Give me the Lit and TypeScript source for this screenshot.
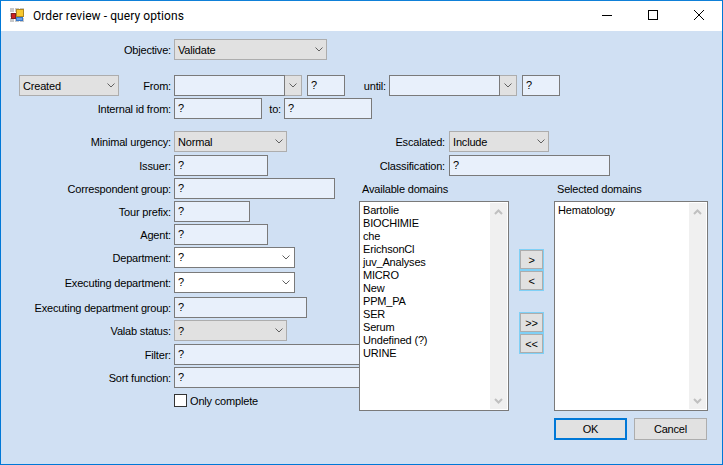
import { LitElement, html, css, svg } from 'lit';
import { customElement } from 'lit/decorators.js';

const CHEVRON = html`<svg class="chev" width="8" height="5" viewBox="0 0 8 5">
  <path d="M0.5 0.5 L4 4 L7.5 0.5" fill="none" stroke="#606060" stroke-width="1" />
</svg>`;

const AVAILABLE = [
  'Bartolie', 'BIOCHIMIE', 'che', 'ErichsonCl', 'juv_Analyses', 'MICRO', 'New',
  'PPM_PA', 'SER', 'Serum', 'Undefined (?)', 'URINE',
];

@customElement('app-root')
export class AppRoot extends LitElement {
  static styles = css`
    :host {
      display: block;
      width: 723px;
      height: 465px;
      box-sizing: border-box;
      border: 1px solid #0078d7;
      border-top-color: #0f80d8;
      overflow: hidden;
      background: #d0e0f3;
      font-family: 'Liberation Sans', Arial, sans-serif;
      font-size: 11px;
      letter-spacing: -0.18px;
      color: #000;
    }

    .titlebar {
      height: 30px;
      background: #fff;
      display: flex;
      align-items: center;
      padding-left: 9px;
    }
    .app-icon {
      margin: 0 9px 3px 0;
    }
    .title {
      font-family: 'Roboto', sans-serif;
      font-size: 12px;
      letter-spacing: 0.08px;
      flex: 1;
    }
    .win-btn {
      width: 46px;
      height: 30px;
      padding-bottom: 2px;
      box-sizing: border-box;
      display: flex;
      align-items: center;
      justify-content: center;
    }

    .form {
      padding-left: 18px;
    }

    .row {
      display: flex;
      align-items: center;
      height: 21px;
    }
    .lbl {
      width: 155px;
      padding-right: 3px;
      box-sizing: border-box;
      text-align: right;
      white-space: nowrap;
      flex: none;
    }

    .field {
      height: 21px;
      box-sizing: border-box;
      flex: none;
      display: flex;
      align-items: center;
      padding-left: 3px;
    }
    .input {
      background: #e8f0fb;
      border: 1px solid #7a7a7a;
    }
    .combo {
      background: #e1e1e1;
      border: 1px solid #adadad;
      justify-content: space-between;
      padding-right: 3px;
    }
    .edit-combo {
      background: #fff;
      border: 1px solid #7a7a7a;
      justify-content: space-between;
      padding-right: 4px;
    }
    .q {
      position: relative;
      top: -1px;
    }

    .dropbtn {
      width: 17px;
      height: 21px;
      box-sizing: border-box;
      background: #e1e1e1;
      border: 1px solid #adadad;
      border-left: none;
      display: flex;
      align-items: center;
      justify-content: center;
      flex: none;
    }

    .main {
      display: grid;
      grid-template-columns: 340px 1fr;
      margin-top: 12px;
    }
    .left {
      display: flex;
      flex-direction: column;
      gap: 2px;
      min-width: 0;
    }

    .right {
      display: flex;
      flex-direction: column;
    }
    .right-top {
      display: flex;
      flex-direction: column;
      gap: 3px;
    }
    .right .lbl {
      width: 90px;
      padding-right: 4px;
    }
    .domain-heads {
      display: flex;
      height: 25px;
      align-items: center;
      padding: 1px 0 0 3px;
      box-sizing: border-box;
    }
    .domain-heads span:first-child {
      width: 195px;
    }
    .domains {
      display: flex;
      height: 210px;
    }
    .list {
      box-sizing: border-box;
      background: #fff;
      border: 1px solid #7a7a7a;
      display: flex;
      justify-content: space-between;
      padding: 2px 1px 1px 3px;
      flex: none;
    }
    .items {
      line-height: 13px;
      white-space: nowrap;
    }
    .scroll {
      width: 17px;
      margin-top: -1px;
      background: #f0f0f0;
      display: flex;
      flex-direction: column;
      justify-content: space-between;
      align-items: center;
      padding: 6px 0 5px;
      box-sizing: border-box;
    }

    .arrows {
      width: 45px;
      flex: none;
      padding: 48px 0 0 10px;
      box-sizing: border-box;
      display: flex;
      flex-direction: column;
    }
    .arrow-group {
      display: flex;
      flex-direction: column;
      width: 25px;
    }
    .arrow-group + .arrow-group {
      margin-top: 21px;
    }
    .arrow {
      width: 25px;
      height: 21px;
      box-sizing: border-box;
      border: 1px solid #7fd0f6;
      outline: 1px solid #adadad;
      outline-offset: -2px;
      background: #e1e1e1;
      display: flex;
      align-items: center;
      justify-content: center;
    }

    .actions {
      display: flex;
      gap: 7px;
      margin: 7px 0 0 195px;
    }
    .btn {
      width: 73px;
      height: 22px;
      box-sizing: border-box;
      background: #e1e1e1;
      border: 1px solid #adadad;
      display: flex;
      align-items: center;
      justify-content: center;
    }
    .btn.default {
      border: 2px solid #0078d7;
    }

    .check {
      display: flex;
      align-items: center;
      margin: 4px 0 0 155px;
      height: 13px;
    }
    .box {
      width: 13px;
      height: 13px;
      box-sizing: border-box;
      border: 1px solid #333;
      background: #fff;
      margin-right: 3px;
    }

    .objective {
      margin-top: 8px;
    }
    .gap-date {
      margin-top: 15px;
    }
    .gap-id {
      margin-top: 2px;
    }
    .date-picker {
      display: flex;
      flex: none;
    }
    .source {
      width: 100px;
    }
    .from-lbl {
      width: 55px;
    }
    .small {
      width: 38px;
      margin-left: 5px;
    }
    .until-lbl {
      width: 44px;
    }
    .to-lbl {
      width: 22px;
      text-align: right;
      padding-right: 3px;
      box-sizing: border-box;
      flex: none;
    }
    .w-153 { width: 153px; }
    .w-111 { width: 111px; }
    .w-88 { width: 88px; }
    .w-113 { width: 113px; }
    .w-100 { width: 100px; }
    .w-94 { width: 94px; }
    .w-161 { width: 161px; }
    .w-76 { width: 76px; }
    .w-121 { width: 121px; }
    .w-133 { width: 133px; }
    .w-long { width: 260px; }
    .list-a { width: 150px; }
    .list-b { width: 154px; }
    .mt-1 { margin-top: 1px; }
    .mt-2 { margin-top: 2px; }
  `;

  private scrollbar() {
    return html`<div class="scroll">
      <svg width="9" height="6" viewBox="0 0 9 6"><path d="M1 5 L4.5 1.5 L8 5" fill="none" stroke="#c0c0c0" stroke-width="2" /></svg>
      <svg width="9" height="6" viewBox="0 0 9 6"><path d="M1 1 L4.5 4.5 L8 1" fill="none" stroke="#c0c0c0" stroke-width="2" /></svg>
    </div>`;
  }

  private input(label: string, width: string, extra = '') {
    return html`<div class="row ${extra}">
      <div class="lbl">${label}</div>
      <div class="field input ${width}"><span class="q">?</span></div>
    </div>`;
  }

  private combo(label: string, value: string, width: string) {
    return html`<div class="row">
      <div class="lbl">${label}</div>
      <div class="field combo ${width}"><span>${value}</span>${CHEVRON}</div>
    </div>`;
  }

  private editCombo(label: string, extra = '') {
    return html`<div class="row ${extra}">
      <div class="lbl">${label}</div>
      <div class="field edit-combo w-121"><span class="q">?</span>${CHEVRON}</div>
    </div>`;
  }

  private datePicker() {
    return html`<div class="date-picker">
      <div class="field input w-111"></div>
      <div class="dropbtn">${CHEVRON}</div>
    </div>`;
  }

  render() {
    return html`
      <div class="titlebar">
        <svg class="app-icon" width="14" height="14" viewBox="0 0 14 14">
          ${svg`
            <rect width="14" height="14" fill="#c8c8c8" />
            <path d="M4.5 0 V14 M0 4.5 H14 M0 9.5 H14 M9.5 0 V14" stroke="#fff" />
            <rect x="1.5" y="5.5" width="4" height="5" fill="#d02020" stroke="#802020" />
            <rect x="6.5" y="1.5" width="7" height="7" fill="#f8c830" stroke="#b08820" />
            <rect x="6.5" y="9.5" width="6" height="3" fill="#6aa0e8" stroke="#3878c8" />
          `}
        </svg>
        <span class="title">Order review - query options</span>
        <div class="win-btn">
          <svg width="10" height="10" viewBox="0 0 10 10"><path d="M0 5.5 H10" stroke="#000" /></svg>
        </div>
        <div class="win-btn">
          <svg width="10" height="10" viewBox="0 0 10 10"><rect x="0.5" y="0.5" width="9" height="9" fill="none" stroke="#000" /></svg>
        </div>
        <div class="win-btn">
          <svg width="10" height="10" viewBox="0 0 10 10"><path d="M0 0 L10 10 M10 0 L0 10" stroke="#000" /></svg>
        </div>
      </div>

      <div class="form">
        <div class="row objective">
          <div class="lbl">Objective:</div>
          <div class="field combo w-153"><span>Validate</span>${CHEVRON}</div>
        </div>

        <div class="row gap-date">
          <div class="field combo source"><span>Created</span>${CHEVRON}</div>
          <div class="lbl from-lbl">From:</div>
          ${this.datePicker()}
          <div class="field input small"><span class="q">?</span></div>
          <div class="lbl until-lbl">until:</div>
          ${this.datePicker()}
          <div class="field input small"><span class="q">?</span></div>
        </div>

        <div class="row gap-id">
          <div class="lbl">Internal id from:</div>
          <div class="field input w-88"><span class="q">?</span></div>
          <div class="to-lbl">to:</div>
          <div class="field input w-88"><span class="q">?</span></div>
        </div>

        <div class="main">
          <div class="left">
            ${this.combo('Minimal urgency:', 'Normal', 'w-113')}
            ${this.input('Issuer:', 'w-94', 'mt-1')}
            ${this.input('Correspondent group:', 'w-161')}
            ${this.input('Tour prefix:', 'w-76')}
            ${this.input('Agent:', 'w-94')}
            ${this.editCombo('Department:')}
            ${this.editCombo('Executing department:', 'mt-2')}
            ${this.input('Executing department group:', 'w-133', 'mt-2')}
            ${this.combo('Valab status:', '?', 'w-113')}
            ${this.input('Filter:', 'w-long', 'mt-1')}
            ${this.input('Sort function:', 'w-long')}
            <div class="check"><div class="box"></div>Only complete</div>
          </div>

          <div class="right">
            <div class="right-top">
              ${this.combo('Escalated:', 'Include', 'w-100')}
              ${this.input('Classification:', 'w-161')}
            </div>
            <div class="domain-heads">
              <span>Available domains</span>
              <span>Selected domains</span>
            </div>
            <div class="domains">
              <div class="list list-a">
                <div class="items">${AVAILABLE.map((a) => html`<div>${a}</div>`)}</div>
                ${this.scrollbar()}
              </div>
              <div class="arrows">
                <div class="arrow-group">
                  <div class="arrow">&gt;</div>
                  <div class="arrow">&lt;</div>
                </div>
                <div class="arrow-group">
                  <div class="arrow">&gt;&gt;</div>
                  <div class="arrow">&lt;&lt;</div>
                </div>
              </div>
              <div class="list list-b">
                <div class="items">Hematology</div>
                ${this.scrollbar()}
              </div>
            </div>
            <div class="actions">
              <div class="btn default">OK</div>
              <div class="btn">Cancel</div>
            </div>
          </div>
        </div>
      </div>
    `;
  }
}

declare global {
  interface HTMLElementTagNameMap {
    'app-root': AppRoot;
  }
}
